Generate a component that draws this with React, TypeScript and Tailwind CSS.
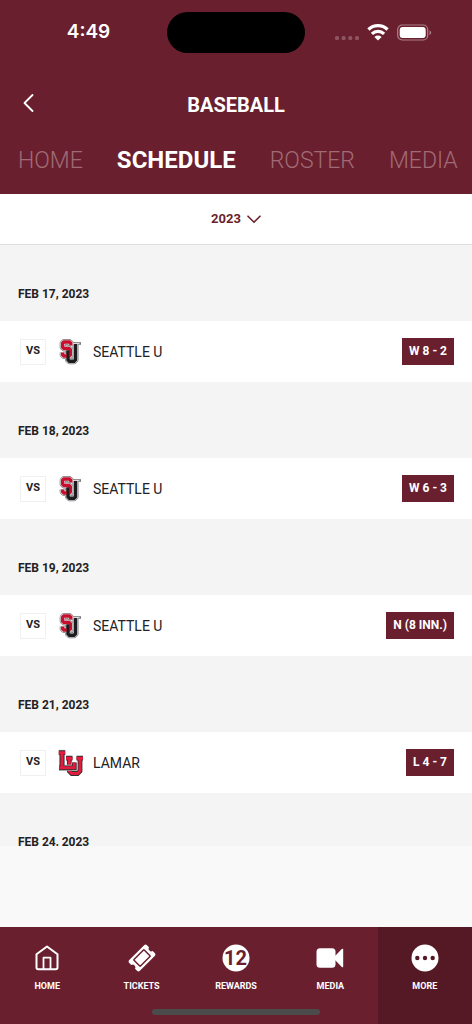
import React from "react";

const tabs = [
  { label: "HOME", active: false },
  { label: "SCHEDULE", active: true },
  { label: "ROSTER", active: false },
  { label: "MEDIA", active: false },
];

type Game = { date: string; team: string; logo: "su" | "lu"; result: string };

const games: Game[] = [
  { date: "FEB 17, 2023", team: "SEATTLE U", logo: "su", result: "W 8 - 2" },
  { date: "FEB 18, 2023", team: "SEATTLE U", logo: "su", result: "W 6 - 3" },
  { date: "FEB 19, 2023", team: "SEATTLE U", logo: "su", result: "N (8 INN.)" },
  { date: "FEB 21, 2023", team: "LAMAR", logo: "lu", result: "L 4 - 7" },
];

const suUpper = "M12.800 7.500V5.300L11.500 4H6L4.700 5.300V9.200L6 10.500H11L12.300 11.800V16.700L11 18H6L4.700 16.700V14.500";
const suLower = "M10 12.500V21.700L11.500 23.200H16L17.500 21.700V6";

function SeattleLogo() {
  return (
    <svg width="26" height="28" viewBox="0 0 26 28" fill="none" aria-hidden="true">
      <g stroke="#77777a" strokeWidth="6" strokeLinejoin="round">
        <path d={suUpper} />
        <path d={suLower} />
      </g>
      <path d="M14.500 5.500H23" stroke="#77777a" strokeWidth="2.600" />
      <g stroke="#e4e4e6" strokeWidth="4.600">
        <path d={suUpper} />
        <path d={suLower} />
      </g>
      <path d="M15 5.600H21.500" stroke="#e4e4e6" strokeWidth="1" />
      <path d={suLower} stroke="#1c1c1e" strokeWidth="3.400" />
      <path d={suUpper} stroke="#c8102e" strokeWidth="3.400" />
      <path d="M10 12.500V20" stroke="#1c1c1e" strokeWidth="2.600" />
    </svg>
  );
}

const luFront = "M.800 3.700H7.200M4 3.700V18.500M1 18.800H16.200V13.500";
const luBack = "M8 9.200H14.500M11.300 9.200V22L13.800 24.500H19.500L22 22V9.200M18.500 9.200H25";

function LamarLogo() {
  return (
    <svg width="26" height="28" viewBox="0 0 26 28" fill="none" aria-hidden="true">
      <path d={luBack} stroke="#303033" strokeWidth="4.800" />
      <path d={luBack} stroke="#e31b3d" strokeWidth="3" />
      <path d={luFront} stroke="#c9c9cc" strokeWidth="6" />
      <path d={luFront} stroke="#303033" strokeWidth="4.800" />
      <path d={luFront} stroke="#e31b3d" strokeWidth="3" />
    </svg>
  );
}

function StatusBar() {
  return (
    <div className="grid grid-cols-[1fr_138px_1fr] items-center pt-3">
      <div className="pl-2.5 text-center font-['Inter',sans-serif] text-[19px] font-semibold">4:49</div>
      <div className="h-[41px] rounded-full bg-black" />
      <div className="flex items-center gap-2 pl-[30px]">
        <svg width="24" height="18" viewBox="0 0 24 18" fill="#8d5560" aria-hidden="true">
          <rect x="0" y="12" width="4" height="4" rx="1.500" />
          <rect x="6.600" y="12" width="4" height="4" rx="1.500" />
          <rect x="13.300" y="12" width="4" height="4" rx="1.500" />
          <rect x="20" y="12" width="4" height="4" rx="1.500" />
        </svg>
        <svg width="22" height="18" viewBox="0 0 22 18" fill="none" stroke="white" strokeWidth="3.200" aria-hidden="true">
          <path d="M1.400 5.500a14 14 0 0 1 19.200 0" />
          <path d="M4.900 9.800a8.800 8.800 0 0 1 12.200 0" />
          <path d="M11 16.500L7.400 13a5.200 5.200 0 0 1 7.200 0z" fill="white" stroke="none" />
        </svg>
        <svg width="35" height="18" viewBox="0 0 35 18" aria-hidden="true">
          <rect x="0.700" y="1" width="30" height="15" rx="4.500" fill="none" stroke="#ab808a" strokeWidth="1.200" />
          <rect x="2.700" y="3" width="26" height="11" rx="3" fill="white" />
          <path d="M32.500 6.400v4.500q1.700-.6 1.700-2.250T32.500 6.400z" fill="#ab808a" />
        </svg>
      </div>
    </div>
  );
}

function HomeIcon() {
  return (
    <svg width="28" height="28" viewBox="0 0 28 28" fill="none" stroke="white" strokeWidth="2" strokeLinejoin="round" aria-hidden="true">
      <path d="M14 2.500L24.500 10.200V23.500a1.800 1.800 0 0 1-1.800 1.800H5.300a1.800 1.800 0 0 1-1.800-1.800V10.200z" />
      <path d="M10.500 25V13.700h7V25" strokeWidth="1.800" />
    </svg>
  );
}

function TicketIcon() {
  return (
    <svg width="28" height="28" viewBox="0 0 28 28" aria-hidden="true">
      <g transform="rotate(-45 14 14)">
        <path d="M3.500 6.500h21a2 2 0 0 1 2 2v2.900a2.700 2.700 0 0 0 0 5.200v2.900a2 2 0 0 1-2 2h-21a2 2 0 0 1-2-2v-2.900a2.700 2.700 0 0 0 0-5.200V8.500a2 2 0 0 1 2-2z" fill="white" />
        <rect x="6.800" y="9.400" width="14.400" height="9.200" rx="0.500" fill="none" stroke="#6a1f2e" strokeWidth="1.500" />
      </g>
    </svg>
  );
}

function RewardsIcon() {
  return (
    <svg width="28" height="28" viewBox="0 0 28 28" aria-hidden="true">
      <circle cx="14" cy="14" r="13.500" fill="white" />
      <text x="13.500" y="21" textAnchor="middle" fontSize="20" fontWeight="700" fill="#6a1f2e">12</text>
    </svg>
  );
}

function VideoIcon() {
  return (
    <svg width="28" height="28" viewBox="0 0 28 28" fill="white" aria-hidden="true">
      <rect x="0.500" y="4.200" width="19" height="19.500" rx="3.500" />
      <path d="M19 12l6.800-6.900c.7-.7 1.400-.4 1.400.5v16.800c0 .9-.7 1.200-1.400.5L19 16z" />
    </svg>
  );
}

function MoreIcon() {
  return (
    <svg width="28" height="28" viewBox="0 0 28 28" aria-hidden="true">
      <circle cx="14" cy="14" r="13.500" fill="white" />
      <g fill="#541924">
        <circle cx="6.300" cy="14" r="2.200" />
        <circle cx="14" cy="14" r="2.200" />
        <circle cx="21.700" cy="14" r="2.200" />
      </g>
    </svg>
  );
}

const navItems = [
  { label: "HOME", Icon: HomeIcon, active: false },
  { label: "TICKETS", Icon: TicketIcon, active: false },
  { label: "REWARDS", Icon: RewardsIcon, active: false },
  { label: "MEDIA", Icon: VideoIcon, active: false },
  { label: "MORE", Icon: MoreIcon, active: true },
];

function DateHeading({ children }: { children: React.ReactNode }) {
  return <h2 className="h-[76px] px-[18px] pt-[39px] text-xs leading-5 font-bold">{children}</h2>;
}

export default function App() {
  return (
    <div className="flex h-screen flex-col overflow-hidden bg-[#f9f9f9] font-['Roboto',sans-serif] text-[#222224]">
      <header className="shrink-0 bg-[#6a1f2e] text-white">
        <StatusBar />
        <div className="mt-8 grid grid-cols-[40px_1fr_40px] items-center px-2">
          <button type="button" aria-label="Back" className="flex h-8 items-center justify-center">
            <svg width="12" height="20" viewBox="0 0 12 20" fill="none" stroke="white" strokeWidth="1.800" strokeLinecap="round" strokeLinejoin="round" aria-hidden="true">
              <path d="M10.500 2L2.500 10l8 8" />
            </svg>
          </button>
          <h1 className="pt-1 text-center text-xl leading-8 font-bold">BASEBALL</h1>
        </div>
        <nav className="flex items-center gap-[34px] overflow-hidden px-[18px] pt-[21px] pb-[15px] leading-[37px]">
          {tabs.map((t) => (
            <a key={t.label} href="#" className={t.active ? "text-2xl leading-[37px] font-bold text-white" : "text-[23px] font-light text-[#a06b76]"}>
              {t.label}
            </a>
          ))}
        </nav>
      </header>

      <button type="button" className="flex h-[51px] shrink-0 items-center justify-center gap-1.5 border-b border-[#dedede] bg-white text-[13px] font-bold text-[#6a1f2e]">
        2023
        <svg width="14" height="9" viewBox="0 0 14 9" fill="none" stroke="currentColor" strokeWidth="1.600" strokeLinecap="round" aria-hidden="true">
          <path d="M1 1.200l6 6 6-6" />
        </svg>
      </button>

      <main className="min-h-0 flex-1 overflow-hidden bg-[#f4f4f4]">
        {games.map((g) => (
          <section key={g.date}>
            <DateHeading>{g.date}</DateHeading>
            <div className="flex h-[61px] items-center bg-white pr-[18px] pl-5">
              <span className="flex size-[26px] items-center justify-center border border-[#f0f0f0] text-[11px] font-bold">VS</span>
              <span className="mr-[9px] ml-3 flex">{g.logo === "su" ? <SeattleLogo /> : <LamarLogo />}</span>
              <span className="text-sm">{g.team}</span>
              <span className="ml-auto bg-[#6a1f2e] px-[7px] py-1 text-xs leading-[19px] font-bold text-white">{g.result}</span>
            </div>
          </section>
        ))}
        <DateHeading>FEB 24, 2023</DateHeading>
      </main>

      <footer className="relative mt-[81px] shrink-0 bg-[#6a1f2e] text-white">
        <nav className="grid grid-cols-5">
          {navItems.map(({ label, Icon, active }) => (
            <a key={label} href="#" className={`flex h-[97px] flex-col items-center gap-1 pt-[17px] text-[9px] leading-5 font-bold ${active ? "bg-[#541924]" : ""}`}>
              <Icon />
              {label}
            </a>
          ))}
        </nav>
        <div className="absolute bottom-[9px] left-1/2 h-1.5 w-[168px] -translate-x-1/2 rounded-full bg-[#4b4b4b]" />
      </footer>
    </div>
  );
}
